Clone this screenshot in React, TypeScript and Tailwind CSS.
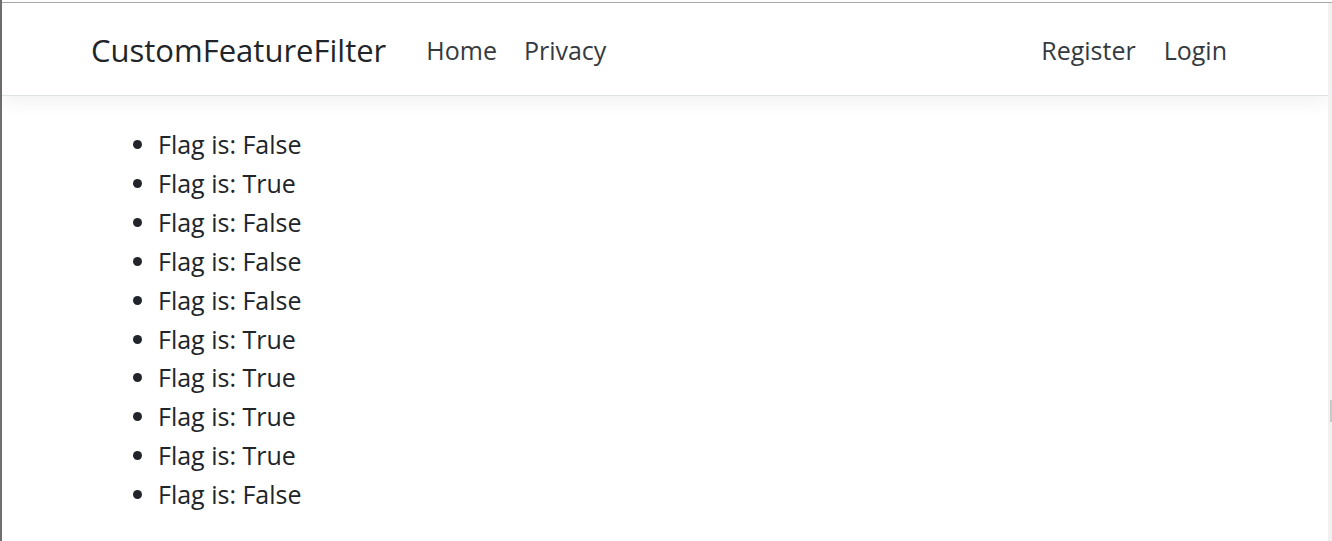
import React from "react";

const flags = ["False", "True", "False", "False", "False", "True", "True", "True", "True", "False"];

export default function App() {
  return (
    <div
      className="flex h-[541px] w-[1332px] overflow-hidden bg-white text-[#212529]"
      style={{ fontFamily: '"Open Sans", "Noto Sans", sans-serif' }}
    >
      <div className="w-[2px] shrink-0 bg-[#6f6f6f]" />
      <div className="flex flex-1 flex-col">
        <div className="h-[2px] shrink-0 bg-white" />
        <div className="h-[1px] shrink-0 bg-[#a9a9a9]" />
        <div className="flex flex-1">
          <div className="flex flex-1 flex-col">
            <nav className="flex h-[93px] shrink-0 items-center border-b border-[#dee2e6] bg-white pl-[89px] pr-[101px] pt-[3px] shadow-[0_6px_18px_rgba(0,0,0,0.06)]">
              <span className="text-[31px] leading-none text-[#212529]">CustomFeatureFilter</span>
              <div className="ml-[40px] flex gap-[27px] text-[25px] leading-none text-[#343a40]">
                <span>Home</span>
                <span>Privacy</span>
              </div>
              <div className="ml-auto flex gap-[28px] text-[25px] leading-none text-[#343a40]">
                <span>Register</span>
                <span>Login</span>
              </div>
            </nav>
            <ul className="ml-[156px] mt-[29px] list-disc text-[25px] leading-[38.9px]">
              {flags.map((f, i) => (
                <li key={i}>Flag is: {f}</li>
              ))}
            </ul>
          </div>
          <div className="flex w-[4px] shrink-0 flex-col bg-[#f1f1f1]">
            <div className="ml-[2px] mt-[397px] h-[22px] w-[2px] bg-[#c8c8c8]" />
          </div>
        </div>
      </div>
    </div>
  );
}
